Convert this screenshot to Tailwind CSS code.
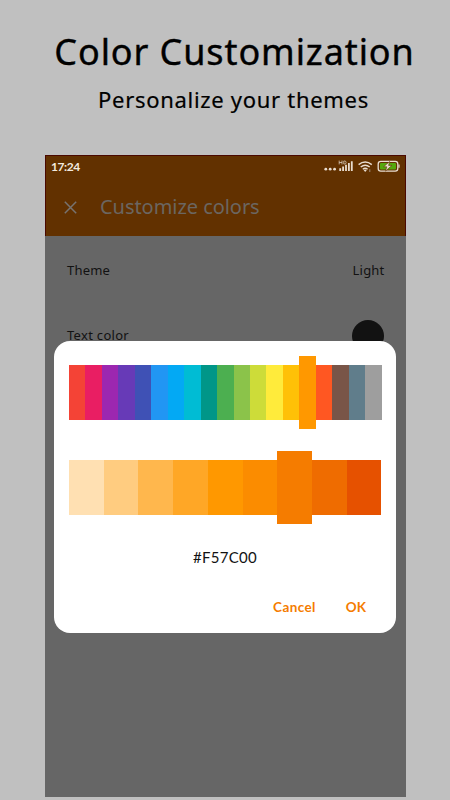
<!DOCTYPE html>
<html lang="en">
<head>
  <meta charset="UTF-8" />
  <meta name="viewport" content="width=device-width, initial-scale=1.0" />
  <title>Color Customization</title>
  <script src="https://cdn.jsdelivr.net/npm/@tailwindcss/browser@4"></script>
</head>
<body class="bg-[#c0c0c0] font-['Noto_Sans',sans-serif] text-black">
  <div class="w-[450px] h-[800px] overflow-hidden">
    <header class="h-[155px] pt-[28px] text-center whitespace-nowrap">
      <h1 class="text-[36px] leading-[48px] tracking-[0.9px] pl-[19px] [-webkit-text-stroke:0.4px_black]">Color Customization</h1>
      <p class="text-[22px] leading-[30px] tracking-[0.7px] mt-[8px] pl-[17px] [-webkit-text-stroke:0.2px_black]">Personalize your themes</p>
    </header>

    <main class="relative ml-[45px] w-[360.5px] h-[641.5px] bg-[#666666]">
      <div class="h-[81px] bg-[#623100] border-t border-l border-r border-[#4a0800]">
        <div class="flex justify-between h-[22px] pl-[5px] pr-[5px]">
          <span class="font-['Lato',sans-serif] font-bold text-[12px] leading-[21px] tracking-[-0.4px] text-[#f3e9df]">17:24</span>
          <svg class="w-[78px] h-[22px]" viewBox="322 156 78 22" fill="#e9ddd0">
            <circle cx="325.8" cy="169.2" r="1.4" />
            <circle cx="330.2" cy="169.2" r="1.4" />
            <circle cx="334.6" cy="169.2" r="1.4" />
            <path d="M339.2 160.6v3.8M342 160.6v3.8M339.2 162.5h2.8M343.8 161v3h.9q1.4 0 1.4-1.5t-1.4-1.5z" fill="none" stroke="#d8cabb" stroke-width=".8" />
            <path d="M339.3 168.2h1.8v2.8h-1.8zM342.2 166.5h1.8v4.5h-1.8zM345.1 164.8h1.8v6.2h-1.8zM348 163h1.8v8h-1.8zM350.9 161.2h1.8v9.8h-1.8z" />
            <g fill="none" stroke="#e9ddd0" stroke-width="1.4">
              <path d="M358.6 164.6q6.6-5.2 13.2 0" />
              <path d="M360.7 167q4.5-3.5 9 0" />
              <path d="M362.8 169.2q2.4-1.8 4.8 0" />
            </g>
            <path d="M363.6 170q1.6-1 3.2 0l-1.6 2z" />
            <path d="M369.8 169.2v2.8" stroke="#a08c78" stroke-width="1" />
            <rect x="378.2" y="161.3" width="19.6" height="9.8" rx="2.6" fill="none" stroke="#e9ddd0" stroke-width="1.3" />
            <rect x="380" y="163" width="16" height="6.4" rx="1" fill="#55a80d" />
            <path d="M399 164.6v3.2" stroke="#e9ddd0" stroke-width="1.2" />
            <path d="M389.6 161.5l-6 5.3h3.2l-1.3 4.3 6.4-5.7h-3.3z" stroke="#623100" stroke-width=".6" />
          </svg>
        </div>
        <div class="flex items-center h-[58px] pl-[18px]">
          <svg class="w-[13px] h-[13px]" viewBox="0 0 13 13" fill="none" stroke="#777370" stroke-width="1.5">
            <path d="M.8.8l11.4 11.4M12.2.8L.8 12.2" />
          </svg>
          <h2 class="ml-[23px] text-[20px] leading-[28px] tracking-[-0.05px] text-[#6b6661]">Customize colors</h2>
        </div>
      </div>

      <div class="flex justify-between items-center h-[70px] pl-[22px] pr-[21px] text-[13px] tracking-[0.2px] text-[#121212]">
        <span>Theme</span>
        <span>Light</span>
      </div>
      <div class="flex justify-between items-center h-[59px] pl-[22px] pr-[22px] text-[13px] tracking-[0.3px] text-[#121212]">
        <span>Text color</span>
        <span class="w-[32px] h-[32px] rounded-full bg-[#121212]"></span>
      </div>

      <!-- color picker dialog -->
      <div class="absolute left-[9px] top-[186px] w-[342px] h-[291.5px] rounded-[16px] bg-white px-[15px] pt-[14.5px] font-['Lato',sans-serif]">
        <div class="flex items-center w-[312.5px] h-[73px]">
          <div class="flex-1 h-[55px] bg-[#f44336]"></div>
          <div class="flex-1 h-[55px] bg-[#e91e63]"></div>
          <div class="flex-1 h-[55px] bg-[#9c27b0]"></div>
          <div class="flex-1 h-[55px] bg-[#673ab7]"></div>
          <div class="flex-1 h-[55px] bg-[#3f51b5]"></div>
          <div class="flex-1 h-[55px] bg-[#2196f3]"></div>
          <div class="flex-1 h-[55px] bg-[#03a9f4]"></div>
          <div class="flex-1 h-[55px] bg-[#00bcd4]"></div>
          <div class="flex-1 h-[55px] bg-[#009688]"></div>
          <div class="flex-1 h-[55px] bg-[#4caf50]"></div>
          <div class="flex-1 h-[55px] bg-[#8bc34a]"></div>
          <div class="flex-1 h-[55px] bg-[#cddc39]"></div>
          <div class="flex-1 h-[55px] bg-[#ffeb3b]"></div>
          <div class="flex-1 h-[55px] bg-[#ffc107]"></div>
          <div class="flex-1 h-[73px] bg-[#ff9800]"></div>
          <div class="flex-1 h-[55px] bg-[#ff5722]"></div>
          <div class="flex-1 h-[55px] bg-[#795548]"></div>
          <div class="flex-1 h-[55px] bg-[#607d8b]"></div>
          <div class="flex-1 h-[55px] bg-[#9e9e9e]"></div>
        </div>
        <div class="flex items-center w-[312.5px] h-[73px] mt-[22.5px]">
          <div class="flex-1 h-[55px] bg-[#ffe0b2]"></div>
          <div class="flex-1 h-[55px] bg-[#ffcc80]"></div>
          <div class="flex-1 h-[55px] bg-[#ffb74d]"></div>
          <div class="flex-1 h-[55px] bg-[#ffa726]"></div>
          <div class="flex-1 h-[55px] bg-[#ff9800]"></div>
          <div class="flex-1 h-[55px] bg-[#fb8c00]"></div>
          <div class="flex-1 h-[73px] bg-[#f57c00]"></div>
          <div class="flex-1 h-[55px] bg-[#ef6c00]"></div>
          <div class="flex-1 h-[55px] bg-[#e65100]"></div>
        </div>
        <p class="mt-[23px] text-center text-[15px] leading-[20px] tracking-[0.3px] text-[#121212]">#F57C00</p>
        <div class="flex justify-end gap-[30px] mt-[30px] pr-[15px] text-[13.5px] leading-[20px] font-bold text-[#f57c00]">
          <button class="tracking-[0.4px]">Cancel</button>
          <button>OK</button>
        </div>
      </div>
    </main>
  </div>
</body>
</html>
